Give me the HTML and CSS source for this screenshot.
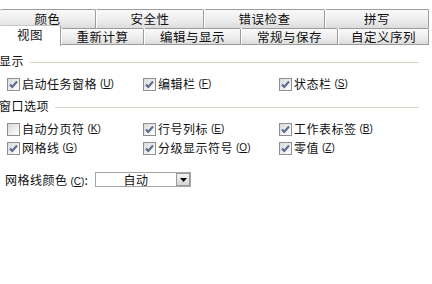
FILE: index.html
```html
<!DOCTYPE html>
<html lang="zh-CN">
<head>
  <meta charset="UTF-8">
  <title>选项</title>
  <link rel="stylesheet" href="styles.css">
</head>
<body>
  <div class="tabs">
    <div class="tab-row top">
      <div class="tab" style="width:96px">颜色</div>
      <div class="tab" style="width:108px">安全性</div>
      <div class="tab" style="width:121px">错误检查</div>
      <div class="tab" style="width:104px">拼写</div>
    </div>
    <div class="tab-row bottom">
      <div class="tab active" style="width:61px">视图</div>
      <div class="tab" style="width:83px">重新计算</div>
      <div class="tab" style="width:97px">编辑与显示</div>
      <div class="tab" style="width:97px">常规与保存</div>
      <div class="tab" style="width:91px">自定义序列</div>
    </div>
  </div>

  <div class="panel">
    <div class="group-title first"><span>显示</span></div>
    <div class="opts row-a">
      <label class="opt"><span class="box on"></span>启动任务窗格<span class="key">(<u>U</u>)</span></label>
      <label class="opt"><span class="box on"></span>编辑栏<span class="key">(<u>F</u>)</span></label>
      <label class="opt"><span class="box on"></span>状态栏<span class="key">(<u>S</u>)</span></label>
    </div>

    <div class="group-title"><span>窗口选项</span></div>
    <div class="opts row-b">
      <label class="opt"><span class="box"></span>自动分页符<span class="key">(<u>K</u>)</span></label>
      <label class="opt"><span class="box on"></span>行号列标<span class="key">(<u>E</u>)</span></label>
      <label class="opt"><span class="box on"></span>工作表标签<span class="key">(<u>B</u>)</span></label>
    </div>
    <div class="opts row-c">
      <label class="opt"><span class="box on"></span>网格线<span class="key">(<u>G</u>)</span></label>
      <label class="opt"><span class="box on"></span>分级显示符号<span class="key">(<u>O</u>)</span></label>
      <label class="opt"><span class="box on"></span>零值<span class="key">(<u>Z</u>)</span></label>
    </div>

    <div class="color-row">
      <span class="color-label">网格线颜色<span class="key">(<u>C</u>)</span>:</span>
      <div class="select">
        <span class="select-value">自动</span>
        <span class="select-btn"><svg width="7" height="4" viewBox="0 0 7 4"><path d="M0 0h7L3.5 4z" fill="#000"/></svg></span>
      </div>
    </div>
  </div>
</body>
</html>
```

FILE: styles.css
```css
body {
  margin: 0;
  background: #fff;
  font-family: "Noto Sans CJK SC", "Noto Sans", sans-serif;
  font-size: 12px;
  color: #111;
  width: 432px;
  height: 284px;
  overflow: hidden;
}
.tabs {
  padding-top: 9px;
  position: relative;
}
.tab-row {
  display: flex;
}
.tab {
  box-sizing: border-box;
  height: 19px;
  line-height: 17px;
  text-align: center;
  font-size: 12.5px;
  letter-spacing: 0.5px;
  border: 1px solid #9c9c9c;
  border-bottom: none;
  border-left-color: #fff;
  border-radius: 2px 2px 0 0;
  background: linear-gradient(#fafafa, #ececec 60%, #dcdcdc);
}
.tab-row.top .tab:first-child {
  border-left: none;
}
.tab-row.bottom {
  height: 17px;
}
.tab-row.bottom .tab {
  height: 17px;
  line-height: 16px;
  border-bottom: 1px solid #9c9c9c;
}
.tab-row.bottom .tab.active {
  height: 21px;
  margin-top: -3px;
  line-height: 18px;
  background: #fff;
  border: none;
  border-right: 1px solid #9c9c9c;
  border-top: 1px solid #c8c8c8;
  position: relative;
  z-index: 1;
}
.panel {
  padding-top: 8px;
}
.group-title {
  display: flex;
  align-items: center;
  height: 16px;
  line-height: 16px;
  width: 419px;
  margin-top: 6px;
  letter-spacing: 0.5px;
}
.group-title.first {
  margin-top: 0;
}
.group-title span {
  margin-left: -1px;
  padding-right: 6px;
}
.group-title::after {
  content: "";
  flex: 1;
  border-top: 1px solid #d6d3c6;
  margin-top: 2px;
}
.opts {
  display: grid;
  grid-template-columns: 136px 136px auto;
  padding-left: 7px;
  height: 16px;
  line-height: 16px;
}
.row-a { margin-top: 7px; }
.row-b { margin-top: 7px; }
.row-c { margin-top: 3px; }
.opt {
  display: flex;
  align-items: center;
  letter-spacing: 0.5px;
}
.box {
  box-sizing: border-box;
  width: 13px;
  height: 13px;
  margin-right: 2px;
  border: 1px solid #8e8f8f;
  background: linear-gradient(135deg, #d9d9d9, #f4f4f4 70%, #fff);
  flex: none;
}
.box.on {
  background-image: url("data:image/svg+xml,%3Csvg xmlns='http://www.w3.org/2000/svg' width='11' height='11' viewBox='0 0 11 11'%3E%3Cpath d='M2 5.5l2.2 2.4L9 2.5' stroke='%235a6a8a' stroke-width='2' fill='none'/%3E%3C/svg%3E"), linear-gradient(135deg, #d9d9d9, #f4f4f4 70%, #fff);
}
.key {
  font-family: "Liberation Sans", sans-serif;
  font-size: 10px;
  letter-spacing: 0;
  margin-left: 3px;
}
.color-row {
  display: flex;
  align-items: center;
  margin-top: 16px;
  padding-left: 5px;
  height: 15px;
}
.color-label {
  width: 90px;
  letter-spacing: 0.5px;
}
.select {
  box-sizing: border-box;
  width: 96px;
  height: 15px;
  border: 1px solid #a5a5a5;
  display: flex;
  align-items: center;
}
.select-value {
  flex: 1;
  text-align: center;
  line-height: 13px;
  letter-spacing: 0.5px;
}
.select-btn {
  box-sizing: border-box;
  width: 14px;
  height: 13px;
  border: 1px solid #9a9a9a;
  background: linear-gradient(#f4f4f4, #d6d6d6);
  display: flex;
  align-items: center;
  justify-content: center;
}
```
